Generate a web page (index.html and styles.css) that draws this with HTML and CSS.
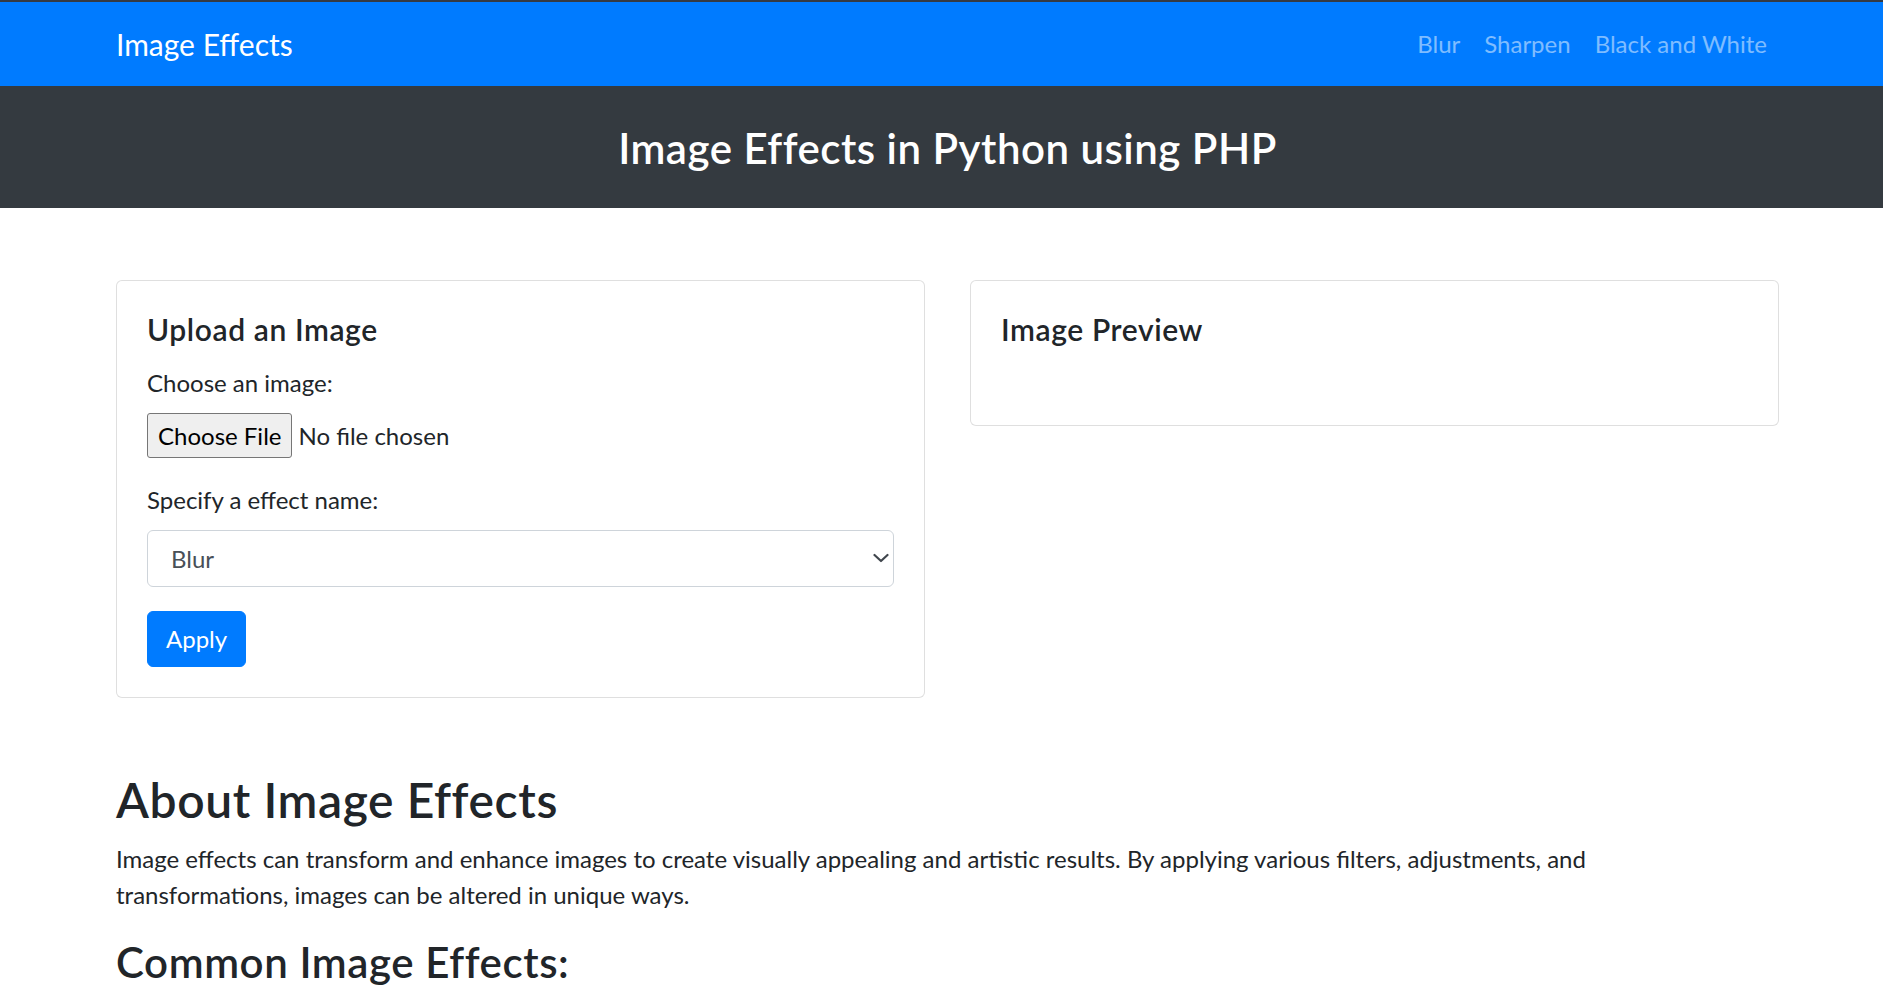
FILE: index.html
```html
<!DOCTYPE html>
<html lang="en">
<head>
<meta charset="utf-8">
<title>Image Effects</title>
<link rel="stylesheet" href="styles.css">
</head>
<body>
<nav class="navbar">
  <div class="container navbar-inner">
    <a class="brand" href="#">Image Effects</a>
    <ul class="nav-links">
      <li><a href="#">Blur</a></li>
      <li><a href="#">Sharpen</a></li>
      <li><a href="#">Black and White</a></li>
    </ul>
  </div>
</nav>
<header class="hero">
  <div class="container">
    <h3 class="hero-title">Image Effects in Python using PHP</h3>
  </div>
</header>
<main class="container">
  <div class="card-row">
    <div class="card">
      <div class="card-body">
        <h5 class="card-title">Upload an Image</h5>
        <form class="upload-form">
          <div class="form-group">
            <label class="label" for="image">Choose an image:</label>
            <input class="file-input" type="file" id="image" name="image">
          </div>
          <div class="form-group">
            <label class="label" for="effect">Specify a effect name:</label>
            <div class="select-wrap">
              <select class="select" id="effect" name="effect">
                <option>Blur</option>
                <option>Sharpen</option>
                <option>Black and White</option>
              </select>
              <svg class="select-arrow" width="16" height="12" viewBox="0 0 16 12" aria-hidden="true"><path d="M1.5 3 L8 9 L14.5 3" fill="none" stroke="#40464d" stroke-width="2.2" stroke-linecap="round" stroke-linejoin="round"/></svg>
            </div>
          </div>
          <button type="button" class="btn-primary">Apply</button>
        </form>
      </div>
    </div>
    <div class="card">
      <div class="card-body">
        <h5 class="card-title">Image Preview</h5>
        <div class="preview"></div>
      </div>
    </div>
  </div>
  <section class="about">
    <h2 class="about-title">About Image Effects</h2>
    <p class="about-text">Image effects can transform and enhance images to create visually appealing and artistic results. By applying various filters, adjustments, and transformations, images can be altered in unique ways.</p>
    <h3 class="sub-title">Common Image Effects:</h3>
  </section>
</main>
</body>
</html>
```

FILE: styles.css
```css
* { box-sizing: border-box; }

html, body {
  margin: 0;
  padding: 0;
}

body {
  font-family: Lato, "Open Sans", "Liberation Sans", sans-serif;
  font-size: 24px;
  line-height: 1.5;
  color: #212529;
  background: #fff;
  border-top: 2px solid #353a42;
}

.container {
  width: 1663px;
  margin-left: calc(50% - 825.5px);
}

/* Navbar */
.navbar {
  background: #007bff;
  padding: 12px 0;
}

.navbar-inner {
  display: flex;
  align-items: center;
  justify-content: space-between;
}

.brand {
  color: #fff;
  text-decoration: none;
  font-size: 30px;
  line-height: 45px;
  padding: 7.5px 0;
}

.nav-links {
  list-style: none;
  margin: 0;
  padding: 0;
  display: flex;
}

.nav-links a {
  display: block;
  padding: 12px 12px;
  color: rgba(255, 255, 255, 0.5);
  text-decoration: none;
  font-size: 24px;
  line-height: 36px;
}

/* Hero */
.hero {
  background: #343a40;
  padding: 36px 0 35px;
}

.hero-title {
  margin: 0;
  text-align: center;
  color: #fff;
  font-size: 42px;
  line-height: 1.2;
  font-weight: 600;
  letter-spacing: 0.5px;
  padding-top: 1px;
}

/* Cards */
.card-row {
  display: flex;
  align-items: flex-start;
  gap: 45px;
  margin-top: 72px;
}

.card {
  flex: 1 1 0;
  border: 1px solid rgba(0, 0, 0, 0.125);
  border-radius: 6px;
  background: #fff;
}

.card-body {
  padding: 30px;
}

.card-title {
  margin: 0 0 18px;
  padding-top: 1px;
  font-size: 30px;
  line-height: 35px;
  font-weight: 600;
  letter-spacing: 0.6px;
}

.preview {
  height: 30px;
}

.upload-form {
  margin: 0;
}

.form-group {
  margin-bottom: 24px;
}

.label {
  display: inline-block;
  margin-bottom: 12px;
}

.file-input {
  display: block;
  width: 100%;
  height: 45px;
  font-family: inherit;
  font-size: 24px;
  color: #212529;
}

.file-input::file-selector-button {
  font-family: inherit;
  font-size: 24px;
  height: 45px;
  padding: 0 10px;
  margin-right: 6px;
  background: #efefef;
  color: #000;
  border: 1px solid #767676;
  border-radius: 3px;
}

.select-wrap {
  position: relative;
}

.select {
  display: block;
  width: 100%;
  height: 57px;
  padding: 9px 18px 9px 23px;
  font-family: inherit;
  font-size: 24px;
  line-height: 36px;
  color: #495057;
  background: #fff;
  border: 1px solid #ced4da;
  border-radius: 6px;
  appearance: none;
  -webkit-appearance: none;
}

.select-arrow {
  position: absolute;
  right: 5px;
  top: 22px;
  pointer-events: none;
}

.btn-primary {
  display: inline-block;
  font-family: inherit;
  font-size: 24px;
  line-height: 36px;
  padding: 9px 18px;
  color: #fff;
  background: #007bff;
  border: 1px solid #007bff;
  border-radius: 6px;
  cursor: pointer;
}

/* About */
.about-title {
  margin: 73px 0 12px;
  font-size: 48px;
  line-height: 1.2;
  font-weight: 600;
  letter-spacing: 0.6px;
}

.about-text {
  margin: 0 0 24px;
  max-width: 1560px;
}

.sub-title {
  margin: 0 0 12px;
  font-size: 42px;
  line-height: 1.2;
  font-weight: 600;
  letter-spacing: 0.6px;
}
```
